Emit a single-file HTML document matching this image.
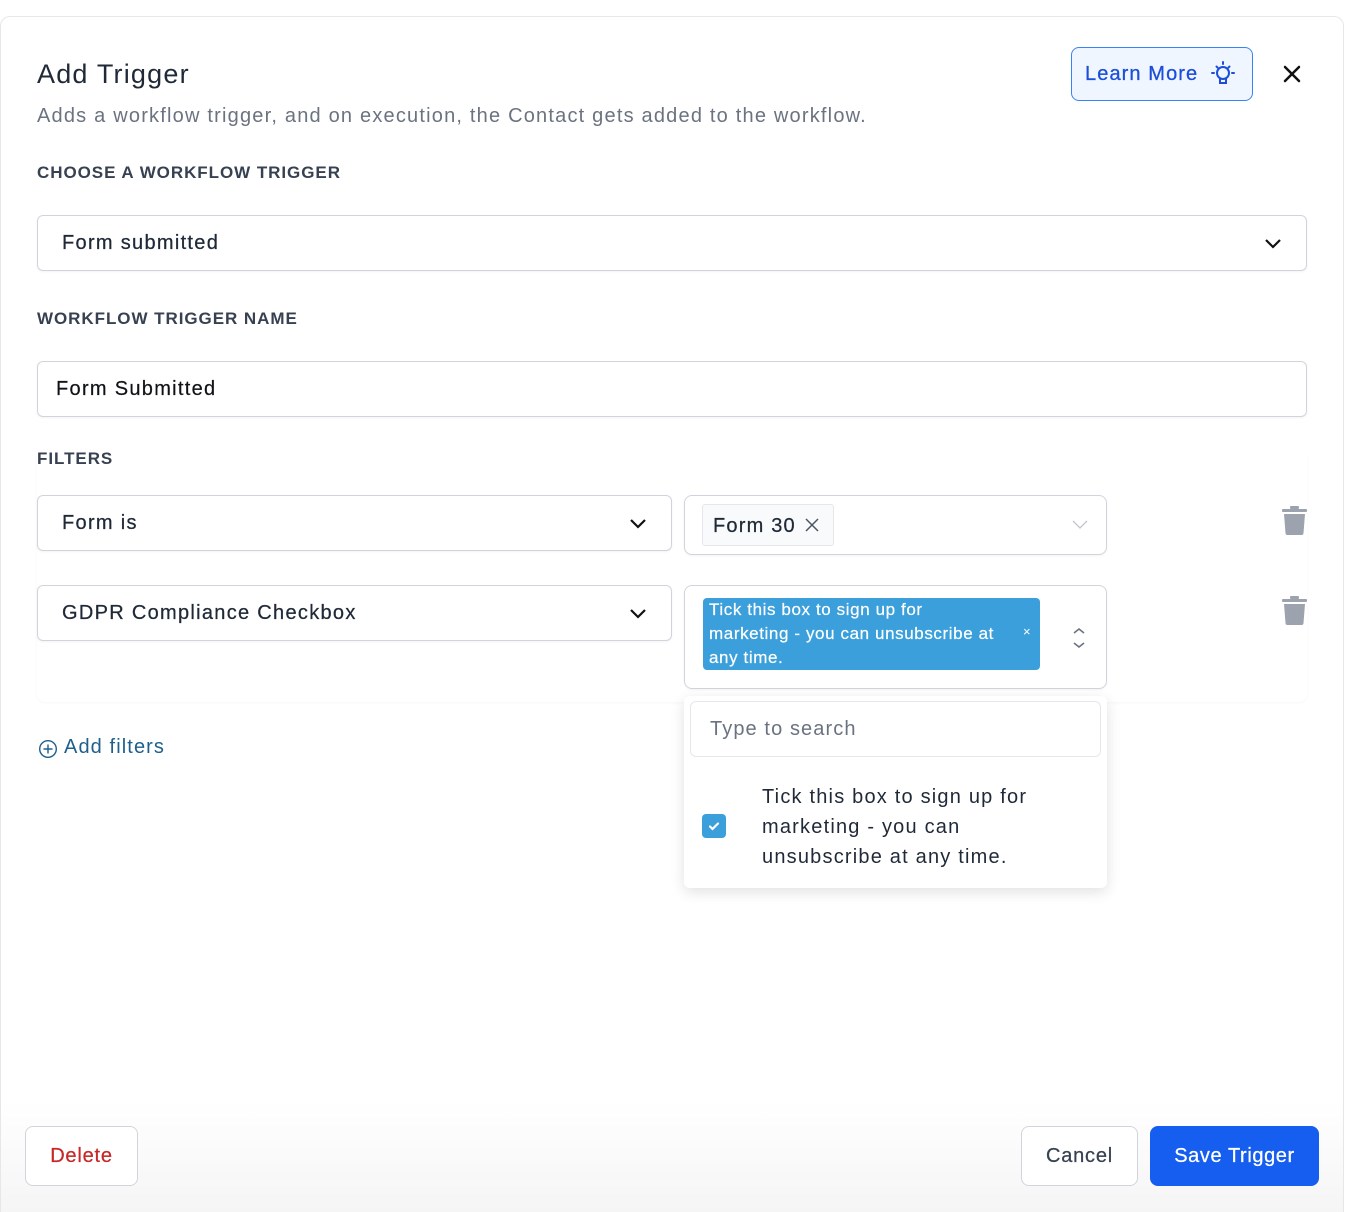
<!DOCTYPE html>
<html><head><meta charset="utf-8"><style>
*{box-sizing:border-box;margin:0;padding:0}
body{width:1356px;height:1212px;background:#fff;font-family:"Liberation Sans","DejaVu Sans",sans-serif;position:relative;overflow:hidden;color:#111827;letter-spacing:1.1px}
.card{position:absolute;left:0;top:16px;width:1344px;height:1196px;border:1px solid #e5e7eb;border-bottom:none;border-radius:10px 10px 0 0;background:#fff}
.a{position:absolute}
.h1{left:37px;top:59px;font-size:27px;color:#1f2937;letter-spacing:1.2px}
.sub{left:37px;top:105px;font-size:20px;color:#6b7280;letter-spacing:1.2px}
.lbl{font-size:17px;font-weight:bold;color:#374151;letter-spacing:.95px}
.box{border:1px solid #d1d5db;border-radius:6px;background:#fff;box-shadow:0 1px 2px rgba(0,0,0,.05)}
.txt{font-size:20px;color:#1f2937;letter-spacing:1.3px;-webkit-text-stroke:.25px #1f2937}
.chev{position:absolute}
.btn{border:1px solid #d1d5db;border-radius:8px;font-size:20px;display:flex;align-items:center;justify-content:center;background:#fff;-webkit-text-stroke:.25px currentColor}
</style></head><body>
<div class="card"></div>
<div class="a h1">Add Trigger</div>
<div class="a sub">Adds a workflow trigger, and on execution, the Contact gets added to the workflow.</div>
<div class="a" style="left:1071px;top:47px;width:182px;height:54px;border:1px solid #3b82f6;border-radius:8px;background:#eff6ff;color:#1d4ed8;font-size:20px;display:flex;align-items:center;padding-left:13px;-webkit-text-stroke:.3px #1d4ed8">Learn More
<svg style="margin-left:10px" width="30" height="30" viewBox="0 0 30 30" fill="none" stroke="#1d4ed8" stroke-width="2" stroke-linecap="round"><circle cx="15" cy="14" r="6"/><path d="M12 20v4h6v-4M15 3v2M6 14h-2M26 14h-2M8.5 7.5l1 1M21.5 7.5l-1 1"/></svg></div>
<svg class="a" style="left:1283px;top:65px" width="18" height="18" viewBox="0 0 18 18" stroke="#111" stroke-width="2.5" stroke-linecap="round"><path d="M2 2l14 14M16 2L2 16"/></svg>

<div class="a lbl" style="left:37px;top:163px">CHOOSE A WORKFLOW TRIGGER</div>
<div class="a box" style="left:37px;top:215px;width:1270px;height:56px"></div>
<div class="a txt" style="left:62px;top:232px">Form submitted</div>
<svg class="chev" style="left:1264px;top:236px" width="18" height="14" viewBox="0 0 18 14" fill="none" stroke="#111" stroke-width="2.2"><path d="M2 4l7 7 7-7"/></svg>

<div class="a lbl" style="left:37px;top:309px">WORKFLOW TRIGGER NAME</div>
<div class="a box" style="left:37px;top:361px;width:1270px;height:56px"></div>
<div class="a txt" style="left:56px;top:378px;color:#111">Form Submitted</div>

<div class="a lbl" style="left:37px;top:449px">FILTERS</div>
<div class="a" style="left:37px;top:450px;width:1270px;height:252px;border-radius:8px;box-shadow:0 1px 3px rgba(0,0,0,.04)"></div>

<div class="a box" style="left:37px;top:495px;width:635px;height:56px"></div>
<div class="a txt" style="left:62px;top:512px">Form is</div>
<svg class="chev" style="left:629px;top:516px" width="18" height="14" viewBox="0 0 18 14" fill="none" stroke="#111" stroke-width="2.2"><path d="M2 4l7 7 7-7"/></svg>
<div class="a box" style="left:684px;top:495px;width:423px;height:60px;border-radius:8px"></div>
<div class="a" style="left:702px;top:504px;width:132px;height:42px;border:1px solid #e5e7eb;background:#f9fafb;border-radius:3px;font-size:20px;color:#1f2937;padding:10px 0 0 10px;letter-spacing:1.2px;-webkit-text-stroke:.25px #1f2937">Form 30</div>
<svg class="a" style="left:804px;top:517px" width="16" height="16" viewBox="0 0 16 16" stroke="#4b5563" stroke-width="1.5"><path d="M2 2l12 12M14 2L2 14"/></svg>
<svg class="a" style="left:1072px;top:520px" width="16" height="10" viewBox="0 0 16 10" fill="none" stroke="#c0c4cc" stroke-width="1.3"><path d="M1 1l7 7 7-7"/></svg>
<svg class="a" style="left:1282px;top:506px" width="25" height="29" viewBox="0 0 25 29" fill="#9ca3af"><rect x="0" y="3" width="25" height="3" rx="1"/><rect x="8" y="0" width="9" height="3" rx="1"/><path d="M2 8h21l-1.5 19a2 2 0 0 1-2 2h-14a2 2 0 0 1-2-2z"/></svg>

<div class="a box" style="left:37px;top:585px;width:635px;height:56px"></div>
<div class="a txt" style="left:62px;top:602px">GDPR Compliance Checkbox</div>
<svg class="chev" style="left:629px;top:606px" width="18" height="14" viewBox="0 0 18 14" fill="none" stroke="#111" stroke-width="2.2"><path d="M2 4l7 7 7-7"/></svg>
<div class="a box" style="left:684px;top:585px;width:423px;height:104px;border-radius:8px"></div>
<div class="a" style="left:703px;top:598px;width:337px;height:72px;background:#3b9fdb;border-radius:4px;color:#fff;font-size:17px;line-height:24px;padding:0 6px;letter-spacing:.6px;-webkit-text-stroke:.2px #fff">Tick this box to sign up for<br>marketing - you can unsubscribe at<br>any time.</div>
<div class="a" style="left:1023px;top:624px;color:#fff;font-size:13px">×</div>
<svg class="a" style="left:1072px;top:627px" width="14" height="22" viewBox="0 0 14 22" fill="none" stroke="#6b7280" stroke-width="1.6"><path d="M2 6l5-4 5 4M2 16l5 4 5-4"/></svg>
<svg class="a" style="left:1282px;top:596px" width="25" height="29" viewBox="0 0 25 29" fill="#9ca3af"><rect x="0" y="3" width="25" height="3" rx="1"/><rect x="8" y="0" width="9" height="3" rx="1"/><path d="M2 8h21l-1.5 19a2 2 0 0 1-2 2h-14a2 2 0 0 1-2-2z"/></svg>

<svg class="a" style="left:38px;top:739px" width="20" height="20" viewBox="0 0 20 20" fill="none" stroke="#1e5f8c" stroke-width="1.4"><circle cx="10" cy="10" r="8.3"/><path d="M10 5.5v9M5.5 10h9"/></svg>
<div class="a" style="left:64px;top:736px;font-size:20px;color:#1e5f8c;letter-spacing:1.1px">Add filters</div>

<div class="a" style="left:684px;top:696px;width:423px;height:192px;background:#fff;border-radius:6px;box-shadow:0 4px 14px rgba(0,0,0,.12)"></div>
<div class="a box" style="left:690px;top:701px;width:411px;height:56px;box-shadow:none;border-color:#e5e7eb"></div>
<div class="a" style="left:710px;top:718px;font-size:20px;color:#6b7280;letter-spacing:1.1px">Type to search</div>
<div class="a" style="left:702px;top:814px;width:24px;height:24px;background:#3b9fdb;border-radius:4px"></div>
<svg class="a" style="left:706px;top:818px" width="16" height="16" viewBox="0 0 16 16" fill="none" stroke="#fff" stroke-width="2.2" stroke-linecap="round"><path d="M4 8.5l2.5 2.5L12 5.5"/></svg>
<div class="a" style="left:762px;top:782px;font-size:20px;line-height:30px;color:#1f2937;letter-spacing:1.2px">Tick this box to sign up for<br>marketing - you can<br>unsubscribe at any time.</div>

<div class="a" style="left:1px;top:1100px;width:1342px;height:112px;background:linear-gradient(#fff,#f5f5f6)"></div>
<div class="a btn" style="left:25px;top:1126px;width:113px;height:60px;color:#c62828;letter-spacing:.8px">Delete</div>
<div class="a btn" style="left:1021px;top:1126px;width:117px;height:60px;color:#374151;letter-spacing:.8px">Cancel</div>
<div class="a btn" style="left:1150px;top:1126px;width:169px;height:60px;background:#155eef;border-color:#155eef;color:#fff;letter-spacing:.6px">Save Trigger</div>
</body></html>
